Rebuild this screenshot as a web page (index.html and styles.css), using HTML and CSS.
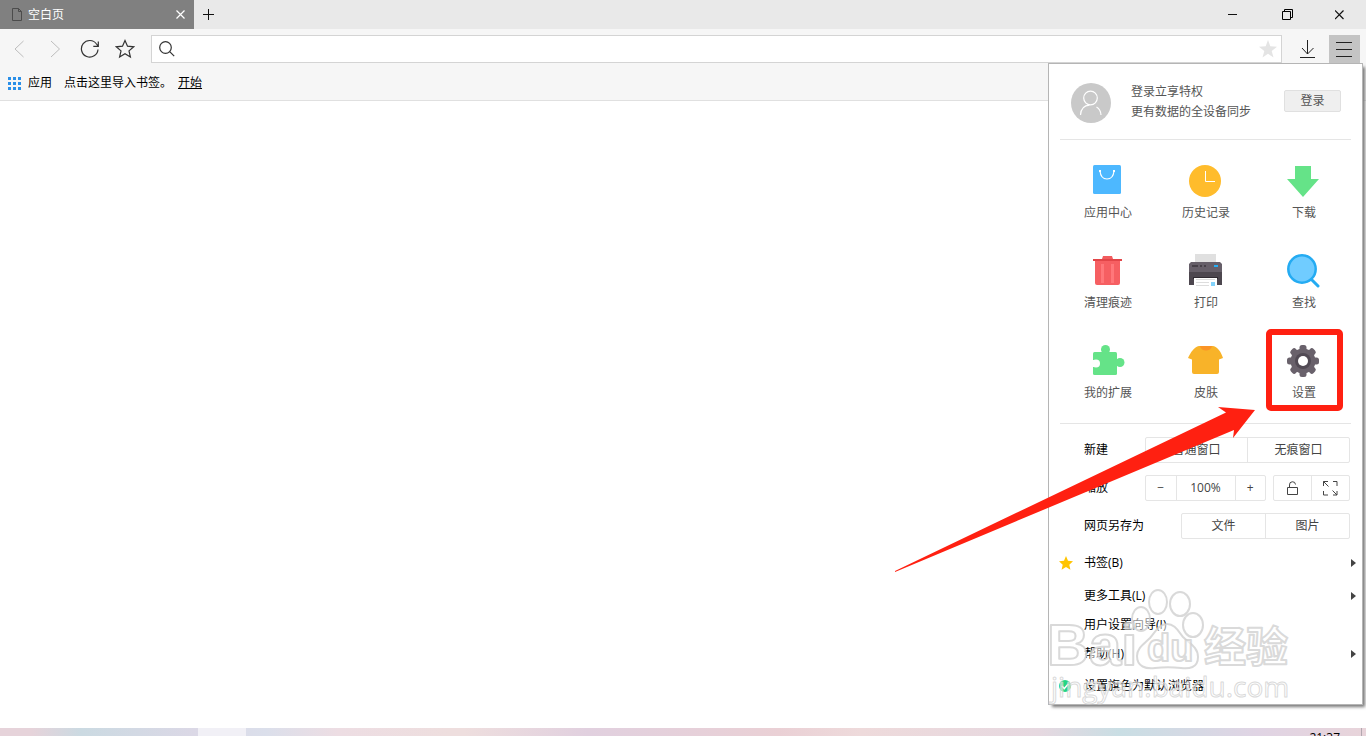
FILE: index.html
```
<!DOCTYPE html>
<html lang="zh-CN">
<head>
<meta charset="utf-8">
<title>空白页</title>
<link rel="stylesheet" href="styles.css">
</head>
<body>
<header class="titlebar">
  <div class="tab">
    <svg class="tab-icon" width="12" height="14" viewBox="0 0 12 14" fill="none" stroke="#4c4c4c"><path d="M.5.5h6l3 3v9H.5zM6.500.5v3h3"/></svg>
    <span class="tab-title">空白页</span>
    <button class="tab-close" aria-label="关闭标签页"><svg width="9" height="9" viewBox="0 0 9 9" stroke="#fff" stroke-width="1.200"><path d="M.5.5l8 8M8.500.5l-8 8"/></svg></button>
  </div>
  <button class="new-tab" aria-label="新标签页"><svg width="12" height="12" viewBox="0 0 12 12" stroke="#111"><path d="M0 5.500h11M5.500 0v11"/></svg></button>
  <div class="window-buttons">
    <button aria-label="最小化"><svg width="12" height="12" viewBox="0 0 12 12" stroke="#111"><path d="M0 5.500h9"/></svg></button>
    <button aria-label="还原"><svg width="12" height="12" viewBox="0 0 12 12" fill="none" stroke="#000"><path d="M1.500 2.500h8v8h-8zM3.500 2.500v-2h8v8h-2"/></svg></button>
    <button aria-label="关闭"><svg width="10" height="10" viewBox="1 0 10 10" stroke="#111" stroke-width="1.200"><path d="M1 .5l8.500 8.500M9.500.5L1 9"/></svg></button>
  </div>
</header>

<nav class="toolbar">
  <button class="tool" aria-label="后退"><svg width="20" height="20" viewBox="0 0 20 20" fill="none" stroke="#bdbdbd"><path d="M13.500 2L5 10l8.500 8"/></svg></button>
  <button class="tool" aria-label="前进"><svg width="20" height="20" viewBox="0 0 20 20" fill="none" stroke="#bdbdbd"><path d="M6 2l8.500 8L6 18"/></svg></button>
  <button class="tool" aria-label="刷新"><svg width="20" height="20" viewBox="0 0 20 20" fill="none" stroke="#333" stroke-width="1.200"><path d="M18 10.500A8.300 8.300 0 1 1 16.500 5L18 7M18.300 2.500V7.300h-5"/></svg></button>
  <button class="tool" aria-label="收藏"><svg width="20" height="20" viewBox="0 0 20 20" fill="none" stroke="#333" stroke-width="1.200"><path d="M10 1.500l2.500 5.700 6.200.6-4.700 4.100 1.400 6.100L10 14.800 4.600 18 6 11.900 1.300 7.800l6.200-.6z"/></svg></button>
  <div class="address">
    <svg width="16" height="16" viewBox="0 0 16 16" fill="none" stroke="#333" stroke-width="1.200"><circle cx="6.500" cy="6.500" r="5.800"/><path d="M10.700 10.700l4.500 4.500"/></svg>
    <input type="text" aria-label="地址栏">
    <svg width="18" height="18" viewBox="0 0 18 18" fill="#e4e4e4"><path d="M9 0l2.300 6.300L18 6.700l-5.300 4.200L14.500 17.500 9 13.700 3.500 17.500l1.800-6.600L0 6.700l6.700-.4z"/></svg>
  </div>
  <button class="download" aria-label="下载"><svg width="16" height="18" viewBox="0 0 16 18" fill="none" stroke="#222"><path d="M7.500 0v14M2 8l5.500 6L13.500 8M0 17.500h15"/></svg></button>
  <button class="menu-toggle" aria-label="菜单"><svg width="18" height="16" viewBox="0 0 18 16" stroke="#222"><path d="M0 1.500h16M0 8.500h16M0 15.500h16"/></svg></button>
</nav>

<div class="bookmarks">
  <a class="apps" href="#apps"><svg width="13" height="13" viewBox="0 0 13 13" fill="#2a8fe8"><path d="M0 0h3v3H0zM5 0h3v3H5zM10 0h3v3h-3zM0 5h3v3H0zM5 5h3v3H5zM10 5h3v3h-3zM0 10h3v3H0zM5 10h3v3H5zM10 10h3v3h-3z"/></svg>应用</a>
  <span>点击这里导入书签。</span>
  <a class="start" href="#import">开始</a>
</div>

<main class="page"></main>

<footer class="taskbar"><span class="task-active"></span><span class="clock">21:37</span></footer>

<aside class="menu">
  <section class="account">
    <svg class="avatar" width="40" height="40" viewBox="0 0 40 40"><circle cx="20" cy="20" r="20" fill="#c9c9c9"/><g fill="none" stroke="#fff" stroke-width="1.200"><circle cx="19.500" cy="15" r="6.800"/><path d="M9.500 32c.4-5.500 3.500-9.500 9-9.800M25.500 24c2.800 1.700 4.300 4.500 4.500 8"/></g></svg>
    <p class="account-text">登录立享特权<br>更有数据的全设备同步</p>
    <button class="login">登录</button>
  </section>
  <hr class="divider">

  <section class="tiles">
    <button class="tile"><svg width="36" height="36" viewBox="1 0 36 36"><rect x="4" y="3" width="28" height="29" rx="1.500" fill="#4db8ff"/><path d="M11 9c.5 5 3 8 7 8s6.500-3 7-8" fill="none" stroke="#fff" stroke-width="1.200"/><path d="M10 8h2v2h-2zM24 8h2v2h-2z" fill="#fff"/></svg>应用中心</button>
    <button class="tile"><svg width="36" height="36" viewBox="0 0 36 36"><circle cx="17" cy="19" r="16" fill="#ffbc2c"/><path d="M17.500 9v10.500H27" fill="none" stroke="#fff"/></svg>历史记录</button>
    <button class="tile"><svg width="36" height="36" viewBox="0 0 36 36" fill="#65e388"><path d="M9 4h16v13h8L17 35 1 17h8z"/></svg>下载</button>
    <button class="tile"><svg width="36" height="36" viewBox="1 -2 36 36"><path d="M14 2h9l1 3H13z" fill="#f25c5e"/><path d="M6 6h25v23q0 2-2 2H8q-2 0-2-2z" fill="#f65f62"/><path d="M4 5h29v2H4z" fill="#e24548"/><path d="M12 10h3v19h-3zM22 10h3v19h-3z" fill="#ff777a"/></svg>清理痕迹</button>
    <button class="tile"><svg width="36" height="36" viewBox="0 -2 36 36"><path d="M7 0h21v9H7z" fill="#e0e0e0"/><path d="M3 8h29l2 2v10H1V10z" fill="#665f69"/><path d="M1 18h33v13H1z" fill="#4d474f"/><path d="M5 23h25v2H5z" fill="#302b32"/><path d="M6 24h23v8H6z" fill="#fff"/><path d="M4 11h6v2H4zM12 11h2v2h-2zM16 11h2v2h-2z" fill="#464048"/><path d="M26 11h4v2h-4z" fill="#25aff5"/><path d="M8 25.500h19M8 28.500h13M8 31.500h13" stroke="#ddd"/><path d="M23 28h4v4h-4z" fill="#83d3fb"/></svg>打印</button>
    <button class="tile"><svg width="36" height="36" viewBox="0 -2 36 36"><path d="M25 25l7 7" stroke="#24abf2" stroke-width="3" stroke-linecap="round"/><circle cx="16" cy="15" r="13.700" fill="#70ccff" stroke="#24abf2" stroke-width="2.500"/></svg>查找</button>
    <button class="tile"><svg width="36" height="36" viewBox="1 0 36 36" fill="#65e388"><rect x="4" y="10" width="24" height="23" rx="1.500"/><circle cx="16.500" cy="7.500" r="4.500"/><circle cx="31" cy="20.500" r="4.500"/><circle cx="7" cy="21.500" r="4" fill="#fff"/><path d="M3 18h3v7H3z" fill="#fff"/></svg>我的扩展</button>
    <button class="tile"><svg width="36" height="36" viewBox="0 0 36 36"><path d="M11 4h14c5 1 8 6 10 12l-4 1.500V30q0 2-2 2H6q-2 0-2-2V17.500L0 16C3 10 6 5 11 4z" fill="#f8b329"/><path d="M12 4h12c-1 6-11 6-12 0z" fill="#fb9426"/></svg>皮肤</button>
    <button class="tile settings"><svg width="36" height="36" viewBox="0 0 36 36"><g fill="#69616b"><circle cx="17" cy="19" r="12.500"/><rect x="13.500" y="3" width="7" height="32" rx="2.500"/><rect x="13.500" y="3" width="7" height="32" rx="2.500" transform="rotate(45 17 19)"/><rect x="13.500" y="3" width="7" height="32" rx="2.500" transform="rotate(90 17 19)"/><rect x="13.500" y="3" width="7" height="32" rx="2.500" transform="rotate(135 17 19)"/></g><circle cx="17" cy="19" r="8" fill="#514a54"/><circle cx="17" cy="19" r="5" fill="#fff"/></svg>设置<span class="highlight"></span></button>
  </section>
  <hr class="divider">

  <section class="controls">
    <div class="row"><span class="row-label">新建</span>
      <div class="group wide"><button>普通窗口</button><button>无痕窗口</button></div>
    </div>
    <div class="row"><span class="row-label">缩放</span>
      <div class="group zoom"><button aria-label="缩小">−</button><button class="zoom-value">100%</button><button aria-label="放大">+</button></div>
      <div class="group tools">
        <button aria-label="锁定缩放"><svg width="12" height="14" viewBox="0 0 12 14" fill="none" stroke="#444"><path d="M.5 6.500h10v7H.5zM2.500 6.500V4a3 3 0 0 1 6-.5"/></svg></button>
        <button aria-label="全屏"><svg width="15" height="15" viewBox="0 0 15 15" fill="none" stroke="#444"><path d="M.5 5V.5H5M.5.5l5 5M10 .5h4V5M.5 10v4H5M14 10v4h-4M14 14l-4.500-4.500"/></svg></button>
      </div>
    </div>
    <div class="row"><span class="row-label">网页另存为</span>
      <div class="group save"><button>文件</button><button>图片</button></div>
    </div>
  </section>

  <ul class="items">
    <li class="spaced"><button class="item"><svg class="lead" width="14" height="14" viewBox="0 0 14 14" fill="#ffc400"><path d="M7 0l2 4.800 5 .5-3.700 3.400 1.100 5L7 11.100l-4.400 2.600 1.100-5L0 5.300l5-.5z"/></svg><span>书签(B)</span><svg class="caret" width="5" height="8" viewBox="0 0 5 8" fill="#444"><path d="M0 0l5 4-5 4z"/></svg></button></li>
    <li><button class="item"><span>更多工具(L)</span><svg class="caret" width="5" height="8" viewBox="0 0 5 8" fill="#444"><path d="M0 0l5 4-5 4z"/></svg></button></li>
    <li><button class="item"><span>用户设置向导(I)</span></button></li>
    <li><button class="item"><span>帮助(H)</span><svg class="caret" width="5" height="8" viewBox="0 0 5 8" fill="#444"><path d="M0 0l5 4-5 4z"/></svg></button></li>
    <li class="default-browser"><button class="item"><svg class="lead" width="12" height="12" viewBox="0 0 12 12"><circle cx="6" cy="6" r="6" fill="#23d584"/><path d="M3 6l2.300 2.500L9.200 4" fill="none" stroke="#fff" stroke-width="1.500"/></svg><span>设置旗色为默认浏览器</span></button></li>
  </ul>

  <svg class="watermark" width="250" height="120" viewBox="0 0 250 120">
    <ellipse cx="109" cy="14" rx="9" ry="12"/><ellipse cx="131" cy="16" rx="10" ry="12"/><ellipse cx="92" cy="31" rx="9" ry="12"/><ellipse cx="144" cy="37" rx="10" ry="12"/>
    <path d="M118 36c8 0 11 7 16 13 6 6 15 10 15 20 0 11-9 12-17 11-9-1-17-1-26 0-9 1-18-1-18-12 0-8 7-12 13-18 6-7 9-14 17-14z"/>
    <text class="wm-brand" x="-2" y="77">Bai</text>
    <text class="wm-du" x="98" y="73">du</text>
    <text class="wm-cn" x="155" y="74">经验</text>
    <text class="wm-url" x="2" y="109">jingyan.baidu.com</text>
  </svg>
  <svg class="arrow" width="360" height="166" viewBox="0 0 360 166" fill="#ff2011"><path d="M0 165L331 6.500 323 1l37 3-22 28 1-8L0 166z"/></svg>
</aside>
</body>
</html>
```

FILE: styles.css
```
* { box-sizing: border-box; }

body {
  position: relative;
  display: flex;
  flex-direction: column;
  min-height: 100vh;
  margin: 0;
  background: #fff;
  color: #000;
  font: 12px/20px "Open Sans", "Noto Sans CJK SC", sans-serif;
}

button {
  display: flex;
  align-items: center;
  justify-content: center;
  padding: 0;
  border: 0;
  background: none;
  color: inherit;
  font: inherit;
}

svg { display: block; flex: none; }
a { color: inherit; text-decoration: none; }

.titlebar { display: flex; height: 29px; background: #e9e9e9; }
.tab {
  display: flex;
  align-items: center;
  width: 194px;
  padding: 0 8px 0 12px;
  background: #808080;
  color: #fff;
}
.tab-title { flex: 1; margin-left: 4px; }
.tab-close { width: 11px; height: 20px; }
.new-tab { width: 30px; }
.window-buttons { display: flex; margin-left: auto; }
.window-buttons button { width: 53px; }

.toolbar {
  display: flex;
  align-items: center;
  height: 41px;
  padding: 0 6px 2px 2px;
  background: #f6f6f6;
}
.tool { width: 35px; height: 30px; }
.address {
  display: flex;
  flex: 1;
  align-items: center;
  height: 28px;
  margin-left: 9px;
  padding: 0 4px 0 7px;
  border: 1px solid #d4d4d4;
  background: #fff;
}
.address input {
  flex: 1;
  min-width: 0;
  padding: 0 8px;
  border: 0;
  outline: 0;
  background: none;
  font: inherit;
}
.download { width: 47px; height: 28px; padding-left: 4px; }
.menu-toggle { width: 31px; height: 28px; background: #c4c4c4; }

.bookmarks {
  display: flex;
  align-items: center;
  gap: 12px;
  height: 31px;
  padding: 0 8px 4px;
  border-bottom: 1px solid #e0e0e0;
  background: #f6f6f6;
}
.apps { display: flex; align-items: center; gap: 7px; }
.bookmarks .start { margin-left: -6px; text-decoration: underline; }

.page { flex: 1; }

.taskbar {
  display: flex;
  height: 8px;
  padding: 0 4px 0 198px;
  overflow: hidden;
  background: linear-gradient(90deg, #e6d3da 0, #e6d3da 7%, #cbdae2 18%, #dbd8e6 43%, #dbdfeb 59%, #eddde3 75%, #eedede 100%) 0 0 / 33% 100% no-repeat, linear-gradient(90deg, #eedede 34%, #e1d0df 43%, #ead0d5 57%, #eedadb 63%, #e6d8e0 76%, #c9dee4 82%, #e0d4e4 92%, #e8d4da 100%);
}
.task-active { width: 48px; background: #f1f0f6; }
.clock {
  margin-left: auto;
  padding-right: 21px;
  border-right: 1px solid #b3a8b0;
}

.menu {
  position: absolute;
  top: 63px;
  right: 3px;
  width: 315px;
  border: 1px solid #b5b5b5;
  background: #fff;
  box-shadow: 3px 3px 3px -1px #777;
}
.divider { height: 1px; margin: 0 11px; border: 0; background: #e5e5e5; }
.account {
  display: flex;
  align-items: center;
  height: 75px;
  padding: 2px 21px 0 22px;
  color: #555;
}
.account-text { flex: 1; margin: 0 0 2px 20px; }
.login {
  width: 57px;
  height: 22px;
  margin-bottom: 4px;
  border: 1px solid #e0e0e0;
  border-radius: 2px;
  background: #efefef;
}

.tiles {
  display: grid;
  grid-template-columns: repeat(3, 1fr);
  row-gap: 29px;
  padding: 22px 9px 20px 10px;
  color: #555;
}
.tile { position: relative; flex-direction: column; gap: 5px; height: 61px; }
.highlight {
  position: absolute;
  top: -13px;
  left: 50%;
  width: 77px;
  height: 82px;
  margin-left: -38px;
  border: 6px solid #ff2011;
  border-radius: 5px;
}

.controls {
  display: flex;
  flex-direction: column;
  gap: 12px;
  padding: 13px 12px 9px 35px;
}
.row { display: flex; align-items: center; height: 26px; }
.row-label { flex: 1; }
.group {
  display: flex;
  height: 26px;
  border: 1px solid #e5e5e5;
  border-radius: 2px;
  color: #444;
}
.group button { flex: 1; }
.group button + button { border-left: 1px solid #e5e5e5; }
.wide { width: 205px; }
.zoom { width: 121px; }
.zoom .zoom-value { flex: none; width: 59px; }
.tools { width: 77px; margin-left: 7px; }
.save { width: 169px; }

.items { margin: 0; padding: 0 0 4px; list-style: none; }
.items .spaced { margin-bottom: 4px; }
.items .default-browser { margin-top: 3px; }
.item {
  position: relative;
  width: 100%;
  height: 29px;
  justify-content: flex-start;
  padding: 0 6px 0 35px;
}
.lead { position: absolute; left: 10px; }
.caret { margin-left: auto; }

.watermark {
  position: absolute;
  bottom: -4px;
  left: 0;
  overflow: visible;
  pointer-events: none;
  fill: #fff;
  fill-opacity: .55;
  stroke: #d0d0d0;
  stroke-opacity: .8;
  stroke-width: 2px;
  stroke-linejoin: round;
}
.wm-brand { font: bold 58px "Liberation Sans", sans-serif; }
.wm-du { font: bold 38px "Liberation Sans", sans-serif; }
.wm-cn { font: bold 42px "Noto Sans CJK SC", sans-serif; }
.watermark .wm-url { font: 28px "Open Sans", sans-serif; stroke-width: 1px; }
.arrow { position: absolute; top: 342px; left: -154px; pointer-events: none; }
```
